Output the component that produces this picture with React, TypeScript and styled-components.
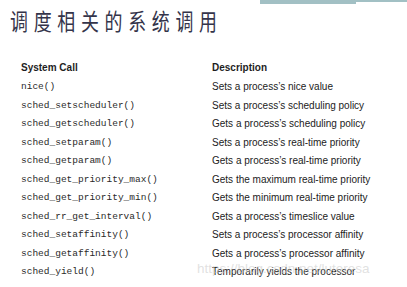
import React from "react";
import styled, { createGlobalStyle } from "styled-components";

const rows: [string, string][] = [
  ["nice()", "Sets a process’s nice value"],
  ["sched_setscheduler()", "Sets a process’s scheduling policy"],
  ["sched_getscheduler()", "Gets a process’s scheduling policy"],
  ["sched_setparam()", "Sets a process’s real-time priority"],
  ["sched_getparam()", "Gets a process’s real-time priority"],
  ["sched_get_priority_max()", "Gets the maximum real-time priority"],
  ["sched_get_priority_min()", "Gets the minimum real-time priority"],
  ["sched_rr_get_interval()", "Gets a process’s timeslice value"],
  ["sched_setaffinity()", "Sets a process’s processor affinity"],
  ["sched_getaffinity()", "Gets a process’s processor affinity"],
  ["sched_yield()", "Temporarily yields the processor"],
];

export default function App() {
  return (
    <>
      <GlobalStyle />
      <Slide>
        <TopRule>
          <RuleSegment $width={96} $height={4} />
          <RuleSegment $width={51} $height={2} />
        </TopRule>
        <Title>调度相关的系统调用</Title>
        <Table>
          <HeadCell>System Call</HeadCell>
          <HeadCell>Description</HeadCell>
          {rows.map(([call, desc]) => (
            <React.Fragment key={call}>
              <CallCell>{call}</CallCell>
              <DescCell>{desc}</DescCell>
            </React.Fragment>
          ))}
        </Table>
        <Watermark>https://blog.csdn.net/luteresa</Watermark>
      </Slide>
    </>
  );
}

const GlobalStyle = createGlobalStyle`
  html, body {
    margin: 0;
    padding: 0;
    background: #ffffff;
  }
`;

const Slide = styled.div`
  position: relative;
  width: 407px;
  height: 287px;
  overflow: hidden;
  background: #ffffff;
  display: flex;
  flex-direction: column;
`;

const TopRule = styled.div`
  display: flex;
  justify-content: flex-end;
  align-items: flex-start;
  height: 4px;
`;

const RuleSegment = styled.div<{ $width: number; $height: number }>`
  width: ${(p) => p.$width}px;
  height: ${(p) => p.$height}px;
  background: #a2c0c4;
`;

const Title = styled.h1`
  margin: 2px 0 0 10px;
  font-family: "Noto Sans CJK SC", "Noto Sans", sans-serif;
  font-weight: 400;
  font-size: 23px;
  line-height: 28px;
  letter-spacing: 7.3px;
  color: #34344a;
  white-space: nowrap;
  transform: scaleX(0.78);
  transform-origin: left center;
`;

const Table = styled.div`
  display: grid;
  grid-template-columns: 191px 1fr;
  grid-auto-rows: 18.5px;
  margin: 25px 0 0 21px;
  align-items: center;
`;

const HeadCell = styled.div`
  font-family: "Liberation Sans", Arial, sans-serif;
  font-weight: 700;
  font-size: 10px;
  color: #1e1e1e;
  margin-bottom: 2px;
`;

const CallCell = styled.div`
  font-family: "Liberation Mono", "Courier New", monospace;
  font-size: 9.5px;
  color: #2a2a2a;
  white-space: nowrap;
`;

const DescCell = styled.div`
  font-family: "Liberation Sans", Arial, sans-serif;
  font-size: 10px;
  color: #222222;
  white-space: nowrap;
`;

const Watermark = styled.div`
  position: absolute;
  left: 197px;
  top: 261px;
  font-family: "Liberation Sans", Arial, sans-serif;
  font-size: 13.5px;
  color: rgba(200, 200, 200, 0.55);
  white-space: nowrap;
`;
